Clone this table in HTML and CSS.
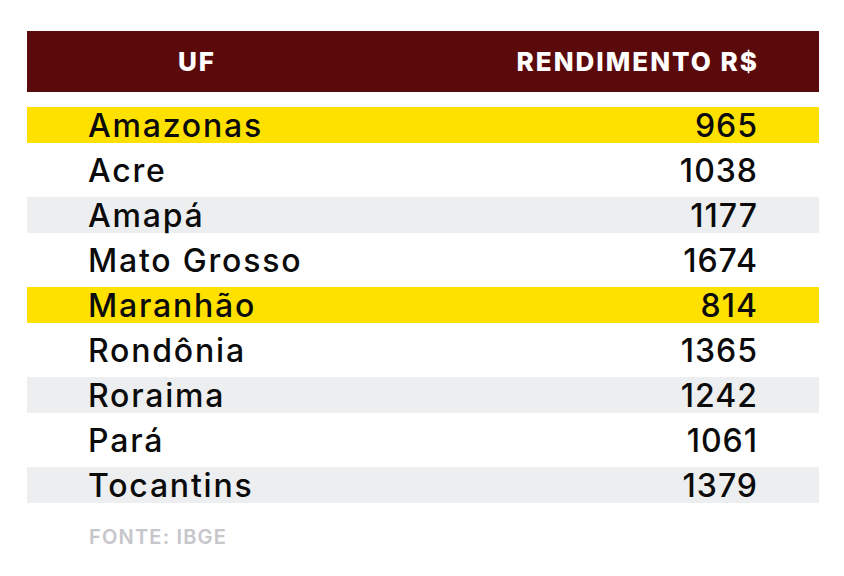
FILE: index.html
```html
<!DOCTYPE html>
<html lang="pt-BR">
<head>
<meta charset="utf-8">
<title>Rendimento por UF</title>
<link rel="stylesheet" href="styles.css">
</head>
<body>
<main class="chart">
  <div class="head">
    <span class="head-uf">UF</span>
    <span class="head-val">RENDIMENTO R$</span>
  </div>
  <div class="rows">
    <div class="row hl"><span class="name">Amazonas</span><span class="val">965</span></div>
    <div class="row"><span class="name">Acre</span><span class="val">1038</span></div>
    <div class="row alt"><span class="name">Amapá</span><span class="val">1177</span></div>
    <div class="row"><span class="name">Mato Grosso</span><span class="val">1674</span></div>
    <div class="row hl"><span class="name">Maranhão</span><span class="val">814</span></div>
    <div class="row"><span class="name">Rondônia</span><span class="val">1365</span></div>
    <div class="row alt"><span class="name">Roraima</span><span class="val">1242</span></div>
    <div class="row"><span class="name">Pará</span><span class="val">1061</span></div>
    <div class="row alt"><span class="name">Tocantins</span><span class="val">1379</span></div>
  </div>
  <p class="source">FONTE: IBGE</p>
</main>
</body>
</html>
```
FILE: styles.css
```css
* { box-sizing: border-box; }
html, body { margin: 0; background: #ffffff; }
body {
  font-family: Inter, "Open Sans", "Liberation Sans", sans-serif;
  color: #0b0b0b;
}
.chart {
  width: 792px;
  margin: 31px 0 0 27px;
}
.head {
  height: 61px;
  background: #5a0a0b;
  color: #ffffff;
  display: flex;
  align-items: center;
  justify-content: space-between;
  padding: 0 60px 0 0;
  font-weight: 800;
  font-size: 26px;
  letter-spacing: 2px;
}
.head-uf {
  width: 340px;
  text-align: center;
}
.rows {
  margin-top: 15px;
  display: flex;
  flex-direction: column;
  gap: 9px;
}
.row {
  height: 36px;
  display: flex;
  align-items: center;
  justify-content: space-between;
  padding: 0 61px 0 61px;
  font-size: 32px;
  font-weight: 500;
}
.name { letter-spacing: 1.8px; }
.val { letter-spacing: 1px; }
.row.hl { background: #ffe100; }
.row.alt { background: #edeef0; }
.source {
  margin: 22px 0 0 62px;
  font-size: 20px;
  font-weight: 600;
  letter-spacing: 1.2px;
  color: #c6c6cb;
}
```
